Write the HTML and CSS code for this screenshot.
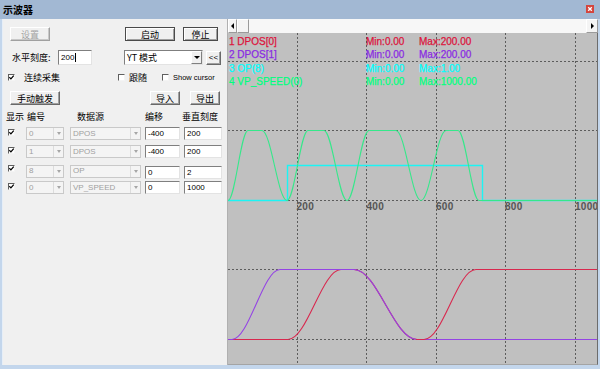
FILE: index.html
```html
<!DOCTYPE html>
<html lang="zh">
<head>
<meta charset="utf-8">
<title>示波器</title>
<link rel="stylesheet" href="styles.css">
</head>
<body>
<div class="window">
  <div class="titlebar">
    <span class="title">示波器</span>
    <span class="close"><svg width="8" height="8" viewBox="0 0 8 8"><rect width="8" height="8" fill="#d4453d"/><path d="M2.2,2.2 L5.8,5.8 M5.8,2.2 L2.2,5.8" stroke="#fff" stroke-width="1.3"/></svg></span>
  </div>
  <div class="client">
    <div class="panel">
      <div class="row-a">
        <button class="btn dis b-set">设置</button>
        <button class="btn def b-start">启动</button>
        <button class="btn def b-stop">停止</button>
      </div>
      <div class="row-b">
        <span class="lbl-h">水平刻度:</span>
        <div class="field f-scale">200<span class="caret"></span></div>
        <div class="select"><span class="sel-txt">YT 模式</span><span class="drop"><i class="tri-down"></i></span></div>
        <button class="btn b-back">&lt;&lt;</button>
      </div>
      <div class="row-c">
        <label class="chk-item"><span class="box"><svg width="5" height="5" viewBox="0 0 5 5"><path d="M0.3,2.2 L1.9,3.9 L4.7,0.6" fill="none" stroke="#000" stroke-width="1.2"/></svg></span><span class="lbl-c1">连续采集</span></label>
        <label class="chk-item"><span class="box"></span><span class="lbl-c2">跟随</span></label>
        <label class="chk-item"><span class="box"></span><span class="lbl-c2 cursor-lbl">Show cursor</span></label>
      </div>
      <div class="row-d">
        <button class="btn b-manual">手动触发</button>
        <button class="btn b-imp">导入</button>
        <button class="btn b-exp">导出</button>
      </div>
      <div class="thead">
        <span class="h1">显示</span>
        <span class="h2">编号</span>
        <span class="h3">数据源</span>
        <span class="h4">编移</span>
        <span class="h5">垂直刻度</span>
      </div>
      <div class="trow">
        <span class="box tbox"><svg width="5" height="5" viewBox="0 0 5 5"><path d="M0.3,2.2 L1.9,3.9 L4.7,0.6" fill="none" stroke="#000" stroke-width="1.2"/></svg></span>
        <div class="combo c1"><span>0</span><span class="drop"><i class="tri-down gray"></i></span></div>
        <div class="combo c2"><span>DPOS</span><span class="drop"><i class="tri-down gray"></i></span></div>
        <div class="field in3">-400</div>
        <div class="field in4">200</div>
      </div>
      <div class="trow">
        <span class="box tbox"><svg width="5" height="5" viewBox="0 0 5 5"><path d="M0.3,2.2 L1.9,3.9 L4.7,0.6" fill="none" stroke="#000" stroke-width="1.2"/></svg></span>
        <div class="combo c1"><span>1</span><span class="drop"><i class="tri-down gray"></i></span></div>
        <div class="combo c2"><span>DPOS</span><span class="drop"><i class="tri-down gray"></i></span></div>
        <div class="field in3">-400</div>
        <div class="field in4">200</div>
      </div>
      <div class="trow">
        <span class="box tbox"><svg width="5" height="5" viewBox="0 0 5 5"><path d="M0.3,2.2 L1.9,3.9 L4.7,0.6" fill="none" stroke="#000" stroke-width="1.2"/></svg></span>
        <div class="combo c1"><span>8</span><span class="drop"><i class="tri-down gray"></i></span></div>
        <div class="combo c2"><span>OP</span><span class="drop"><i class="tri-down gray"></i></span></div>
        <div class="field in3 low">0</div>
        <div class="field in4 low">2</div>
      </div>
      <div class="trow">
        <span class="box tbox"><svg width="5" height="5" viewBox="0 0 5 5"><path d="M0.3,2.2 L1.9,3.9 L4.7,0.6" fill="none" stroke="#000" stroke-width="1.2"/></svg></span>
        <div class="combo c1"><span>0</span><span class="drop"><i class="tri-down gray"></i></span></div>
        <div class="combo c2"><span>VP_SPEED</span><span class="drop"><i class="tri-down gray"></i></span></div>
        <div class="field in3">0</div>
        <div class="field in4">1000</div>
      </div>
    </div>
    <div class="scope">
      <div class="hscroll">
        <span class="sb-btn sb-left"><i class="tri-left"></i></span>
        <span class="sb-btn sb-thumb"></span>
        <span class="sb-track"></span>
        <span class="sb-btn sb-right"><i class="tri-right"></i></span>
      </div>
      <div class="plot-wrap">
        <svg class="plot" width="369" height="331" viewBox="0 0 369 331">
          <g class="grid">
            <path d="M69.5,0V331 M138.5,0V331 M208.5,0V331 M277.5,0V331 M347.5,0V331"/>
            <path d="M0,28.5H369 M0,97.5H369 M0,167.5H369 M0,236.5H369 M0,306.5H369"/>
          </g>
          <g class="axis">
            <text x="68.5" y="176.5">200</text>
            <text x="138.5" y="176.5">400</text>
            <text x="208" y="176.5">600</text>
            <text x="277" y="176.5">800</text>
            <text x="347" y="176.5">1000</text>
          </g>
          <polyline class="cv cyan" points="0,167.5 59.5,167.5 59.5,132.5 254.5,132.5 254.5,167.5 369,167.5"/>
          <path class="cv green" d="M0,167.5 C7.2,167.5 12.8,97.5 20,97.5 L34,97.5 C43,97.5 50,167.5 59,167.5 C66.6,167.5 72.4,97.5 80,97.5 L96,97.5 C104.3,97.5 110.7,167.5 119,167.5 C127,167.5 133,97.5 141,97.5 L168,97.5 C177,97.5 184,167.5 193,167.5 C202,167.5 209,97.5 218,97.5 L230,97.5 C237.6,97.5 243.4,167.5 251,167.5 L369,167.5"/>
          <path class="cv red" d="M0,306.5 L60,306.5 C79,306.5 94,236.5 113,236.5 L126,236.5 C149,236.5 166,306.5 189,306.5"/>
          <path class="cv purple" d="M0,306.5 L4,306.5 C21,306.5 35,236.5 52,236.5 L126,236.5 C149,236.5 166,306.5 189,306.5 L369,306.5"/>
          <path class="cv red" d="M188,306.5 L196,306.5 C215,306.5 229,236.5 248,236.5 L369,236.5"/>
          <g class="legend">
            <text class="l1" x="1" y="11.5">1 DPOS[0]</text>
            <text class="l1" x="138" y="11.5">Min:0.00</text>
            <text class="l1" x="191" y="11.5">Max:200.00</text>
            <text class="l2" x="1" y="25">2 DPOS[1]</text>
            <text class="l2" x="138" y="25">Min:0.00</text>
            <text class="l2" x="191" y="25">Max:200.00</text>
            <text class="l3" x="1" y="38.5">3 OP(8)</text>
            <text class="l3" x="138" y="38.5">Min:0.00</text>
            <text class="l3" x="191" y="38.5">Max:1.00</text>
            <text class="l4" x="1" y="52">4 VP_SPEED(0)</text>
            <text class="l4" x="138" y="52">Min:0.00</text>
            <text class="l4" x="191" y="52">Max:1000.00</text>
          </g>
        </svg>
      </div>
    </div>
  </div>
</div>
</body>
</html>
```
FILE: styles.css
```css
* { box-sizing: border-box; }
html, body { margin: 0; padding: 0; }
body {
  width: 600px;
  height: 369px;
  overflow: hidden;
  font-family: "Noto Sans CJK SC", "Liberation Sans", sans-serif;
  background: #c3d6ec;
}
.window {
  width: 600px;
  height: 369px;
  display: flex;
  flex-direction: column;
  background: #c3d6ec;
}
.titlebar {
  height: 19px;
  flex: none;
  background: #a2b8d3;
  display: flex;
  align-items: center;
  justify-content: space-between;
  padding: 0 6px 0 3px;
}
.title {
  font-size: 10px;
  font-weight: 700;
  color: #000;
  line-height: 1;
}
.close { display: flex; margin-top: -2px; }
.client {
  flex: 1;
  display: flex;
  margin: 0 3px 4px 2px;
  background: #f0f0f0;
  border-left: 1px solid #e6eef7;
}

/* left panel */
.panel {
  width: 224px;
  flex: none;
  display: flex;
  flex-direction: column;
  font-size: 9px;
  color: #000;
  line-height: 1;
}
.btn {
  font-family: "Noto Sans CJK SC", "Liberation Sans", sans-serif;
  font-size: 9px;
  line-height: 1;
  height: 14px;
  padding: 0;
  margin: 0;
  color: #000;
  background: #f0f0f0;
  border: 1px solid;
  border-color: #fff #696969 #696969 #fff;
  box-shadow: inset -1px -1px 0 #a0a0a0;
  display: flex;
  align-items: center;
  justify-content: center;
}
.btn.dis { color: #a3a3a3; box-shadow: inset -1px -1px 0 #c8c8c8; border-color: #fff #a0a0a0 #a0a0a0 #fff; }
.btn.def {
  border-color: #4a4a4a;
  box-shadow: inset 1px 1px 0 #fff, inset -1px -1px 0 #a0a0a0;
}
.row-a {
  display: flex;
  height: 14px;
  margin-top: 8px;
  padding-left: 7px;
}
.b-set { width: 40px; }
.b-start { width: 50px; margin-left: 75px; }
.b-stop { width: 35px; margin-left: 8px; }

.row-b {
  display: flex;
  align-items: center;
  height: 15px;
  margin-top: 9px;
  padding-left: 9px;
}
.lbl-h { width: 46px; }
.field {
  height: 13px;
  background: #fff;
  border: 1px solid;
  border-color: #7f7f7f #e3e3e3 #e3e3e3 #7f7f7f;
  font-family: "Liberation Sans", sans-serif;
  font-size: 8px;
  display: flex;
  align-items: center;
  padding-left: 2px;
  color: #000;
}
.f-scale { width: 34px; height: 15px; }
.caret { width: 1px; height: 9px; background: #000; margin-left: 1px; }
.select {
  width: 79px;
  height: 15px;
  margin-left: 32px;
  background: #fff;
  border: 1px solid;
  border-color: #7f7f7f #e3e3e3 #e3e3e3 #7f7f7f;
  display: flex;
  align-items: center;
  justify-content: space-between;
}
.sel-txt { padding-left: 2px; font-size: 9px; }
.select .drop {
  width: 11px;
  height: 13px;
  background: #f0f0f0;
  border: 1px solid;
  border-color: #fff #808080 #808080 #fff;
  display: flex;
  align-items: center;
  justify-content: center;
}
.tri-down {
  width: 0; height: 0;
  border-left: 3px solid transparent;
  border-right: 3px solid transparent;
  border-top: 3px solid #000;
}
.tri-down.gray { border-top-color: #a6a6a6; border-left-width: 2.5px; border-right-width: 2.5px; }
.b-back {
  width: 15px;
  margin-left: 3px;
  font-family: "Liberation Sans", sans-serif;
  font-size: 8px;
}

.row-c {
  display: grid;
  grid-template-columns: 110px 44px auto;
  height: 9px;
  margin-top: 8px;
  padding-left: 5px;
  align-items: center;
}
.chk-item { display: flex; align-items: center; }
.box {
  width: 7px;
  height: 7px;
  flex: none;
  background: #fff;
  border: 1px solid;
  border-color: #5f5f5f #f4f4f4 #f4f4f4 #5f5f5f;
  display: flex;
  align-items: center;
  justify-content: center;
}
.lbl-c1 { margin-left: 9px; }
.lbl-c2 { margin-left: 4px; }
.cursor-lbl { font-family: "Liberation Sans", sans-serif; font-size: 7.5px; }

.row-d {
  display: flex;
  height: 14px;
  margin-top: 9px;
  padding-left: 7px;
}
.b-manual { width: 50px; }
.b-imp { width: 30px; margin-left: 90px; }
.b-exp { width: 30px; margin-left: 10px; }

.thead, .trow {
  display: grid;
  grid-template-columns: 20px 44px 75px 39px 38px;
  padding-left: 3px;
  align-items: center;
}
.thead { height: 11px; margin-top: 6px; }
.h2 { margin-left: 1px; }
.h3 { margin-left: 7px; }
.h5 { margin-left: -2px; }
.trow { height: 13px; margin-top: 5px; }
.tbox { margin-left: 2px; align-self: start; margin-top: 2px; }
.combo {
  height: 13px;
  background: #f4f4f4;
  border: 1px solid #c9c9c9;
  display: flex;
  align-items: center;
  justify-content: space-between;
  padding-left: 2px;
  color: #a0a0a0;
  font-family: "Liberation Sans", sans-serif;
  font-size: 8px;
}
.combo .drop {
  width: 10px;
  height: 11px;
  border-left: 1px solid #dcdcdc;
  display: flex;
  align-items: center;
  justify-content: center;
}
.c1 { width: 38px; }
.c2 { width: 71px; }
.in3 { width: 35px; }
.in4 { width: 38px; }
.field.low { margin-top: 3px; }

/* scope */
.scope {
  flex: 1;
  display: flex;
  flex-direction: column;
  border-left: 1px solid #b0b0b0;
}
.hscroll {
  height: 14px;
  flex: none;
  display: flex;
  background: #f7f7f7;
}
.sb-btn {
  background: #f4f4f4;
  border: 1px solid;
  border-color: #fff #9a9a9a #9a9a9a #fff;
  display: flex;
  align-items: center;
  justify-content: center;
}
.sb-left { width: 9px; }
.sb-thumb { width: 12px; }
.sb-track { flex: 1; }
.sb-right { width: 12px; }
.tri-left {
  width: 0; height: 0;
  border-top: 3px solid transparent;
  border-bottom: 3px solid transparent;
  border-right: 3px solid #000;
}
.tri-right {
  width: 0; height: 0;
  border-top: 3px solid transparent;
  border-bottom: 3px solid transparent;
  border-left: 3px solid #000;
}
.plot-wrap {
  flex: 1;
  background: #c0c0c0;
  border-right: 1px solid #6c6c6c;
  border-bottom: 1px solid #a4a4a4;
  overflow: hidden;
}
.plot { display: block; }
.grid path {
  fill: none;
  stroke: #5c5c5c;
  stroke-width: 1;
  stroke-dasharray: 2 2;
}
.axis text {
  font-family: "Liberation Sans", sans-serif;
  font-size: 10px;
  font-weight: 700;
  fill: #555;
  letter-spacing: 0.3px;
}
.cv { fill: none; stroke-width: 1.1; }
.cyan { stroke: #1cf4f4; stroke-width: 1.4; }
.green { stroke: #35e88a; }
.red { stroke: #d8284e; }
.purple { stroke: #9444e4; }
.legend text {
  font-family: "Liberation Sans", sans-serif;
  font-size: 10px;
  stroke-width: 0.25px;
}
.l1 { fill: #dc143c; stroke: #dc143c; }
.l2 { fill: #8a2be2; stroke: #8a2be2; }
.l3 { fill: #00ffff; stroke: #00ffff; }
.l4 { fill: #00ff7f; stroke: #00ff7f; }
```
